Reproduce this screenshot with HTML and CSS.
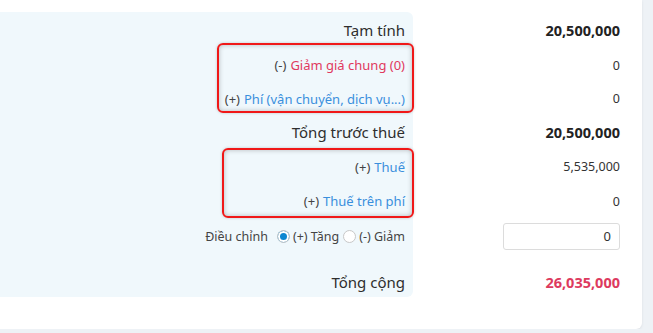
FILE: index.html
```html
<!DOCTYPE html>
<html lang="vi">
<head>
  <meta charset="UTF-8" />
  <meta name="viewport" content="width=device-width, initial-scale=1.0" />
  <title>Tổng cộng đơn hàng</title>
  <link rel="stylesheet" href="styles.css">
</head>
<body>
  <div class="summary-card">
    <div class="summary">
      <div class="summary-labels">
        <div class="row row-1 label-main">Tạm tính</div>
        <div class="row row-2 label-sub"><span class="sign">(-)</span> <span class="text-red">Giảm giá chung (0)</span></div>
        <div class="row row-3 label-sub"><span class="sign">(+)</span> <span class="text-blue">Phí (vận chuyển, dịch vụ...)</span></div>
        <div class="row row-4 label-main">Tổng trước thuế</div>
        <div class="row row-5 label-sub"><span class="sign">(+)</span> <span class="text-blue">Thuế</span></div>
        <div class="row row-6 label-sub"><span class="sign">(+)</span> <span class="text-blue">Thuế trên phí</span></div>
        <div class="row row-7 label-sub adjust">
          <span class="adjust-label">Điều chỉnh</span>
          <label class="radio"><span class="radio-dot checked"></span>(+) Tăng</label>
          <label class="radio"><span class="radio-dot"></span>(-) Giảm</label>
        </div>
        <div class="row row-8 label-main">Tổng cộng</div>
      </div>

      <div class="summary-values">
        <div class="row row-1 value-bold">20,500,000</div>
        <div class="row row-2 value">0</div>
        <div class="row row-3 value">0</div>
        <div class="row row-4 value-bold">20,500,000</div>
        <div class="row row-5 value">5,535,000</div>
        <div class="row row-6 value">0</div>
        <div class="row row-7 value"><input class="adjust-input" type="text" value="0"></div>
        <div class="row row-8 value-bold text-total">26,035,000</div>
      </div>
    </div>

    <!-- highlight boxes drawn over the labels -->
    <div class="highlight highlight-fees"></div>
    <div class="highlight highlight-tax"></div>
  </div>
</body>
</html>
```

FILE: styles.css
```css
body {
  margin: 0;
  background-color: #eef2f6;
  font-family: 'Noto Sans', 'Open Sans', sans-serif;
  color: #333;
}

.summary-card {
  position: relative;
  width: 642px;
  height: 329px;
  box-sizing: border-box;
  padding-top: 12px;
  background-color: #fff;
  border-radius: 0 0 6px 0;
  box-shadow: 0 1px 3px rgba(0, 0, 0, 0.08);
}

.summary {
  display: flex;
}

.summary-labels {
  width: 413px;
  box-sizing: border-box;
  padding-right: 8px;
  background-color: #f0f8fc;
  border-radius: 0 6px 6px 0;
  display: flex;
  flex-direction: column;
  align-items: flex-end;
}

.summary-values {
  width: 207px;
  display: flex;
  flex-direction: column;
  align-items: flex-end;
}

.row {
  display: flex;
  align-items: center;
  justify-content: flex-end;
}

.row-1 { height: 36px; }
.row-2 { height: 34px; }
.row-3 { height: 33px; }
.row-4 { height: 34px; }
.row-5 { height: 35px; }
.row-6 { height: 34px; }
.row-7 { height: 36px; }
.row-8 { height: 31px; padding-top: 12px; }

.label-main {
  font-size: 15px;
  color: #2e2e2e;
}

.label-sub {
  font-size: 13px;
  color: #444;
  gap: 4px;
}

.sign {
  color: #444;
}

.text-red {
  color: #e0395e;
}

.text-blue {
  color: #3a8fdc;
}

.value {
  font-size: 12.5px;
  color: #333;
}

.value-bold {
  font-size: 14.5px;
  font-weight: 700;
  color: #222;
}

.text-total {
  color: #dd3a5e;
}

.adjust {
  gap: 4px;
  font-size: 12.5px;
}

.adjust-label {
  margin-right: 5px;
}

.radio {
  display: flex;
  align-items: center;
  gap: 3px;
}

.radio-dot {
  width: 13px;
  height: 13px;
  box-sizing: border-box;
  border: 1px solid #c8c8c8;
  border-radius: 50%;
  background-color: #fff;
}

.radio-dot.checked {
  background-color: #0b86d1;
  box-shadow: inset 0 0 0 2px #fff;
}

.adjust-input {
  width: 117px;
  height: 27px;
  box-sizing: border-box;
  border: 1px solid #dcdcdc;
  border-radius: 3px;
  padding: 0 8px;
  text-align: right;
  font-family: 'Noto Sans', 'Open Sans', sans-serif;
  font-size: 13px;
  color: #333;
}

.highlight {
  position: absolute;
  box-sizing: border-box;
  border: 2px solid #f01818;
  border-radius: 6px;
  box-shadow: inset 0 0 5px rgba(0, 0, 0, 0.25), 0 0 3px rgba(0, 0, 0, 0.2);
}

.highlight-fees {
  left: 217px;
  top: 43px;
  width: 197px;
  height: 70px;
}

.highlight-tax {
  left: 222px;
  top: 148px;
  width: 192px;
  height: 70px;
}
```
